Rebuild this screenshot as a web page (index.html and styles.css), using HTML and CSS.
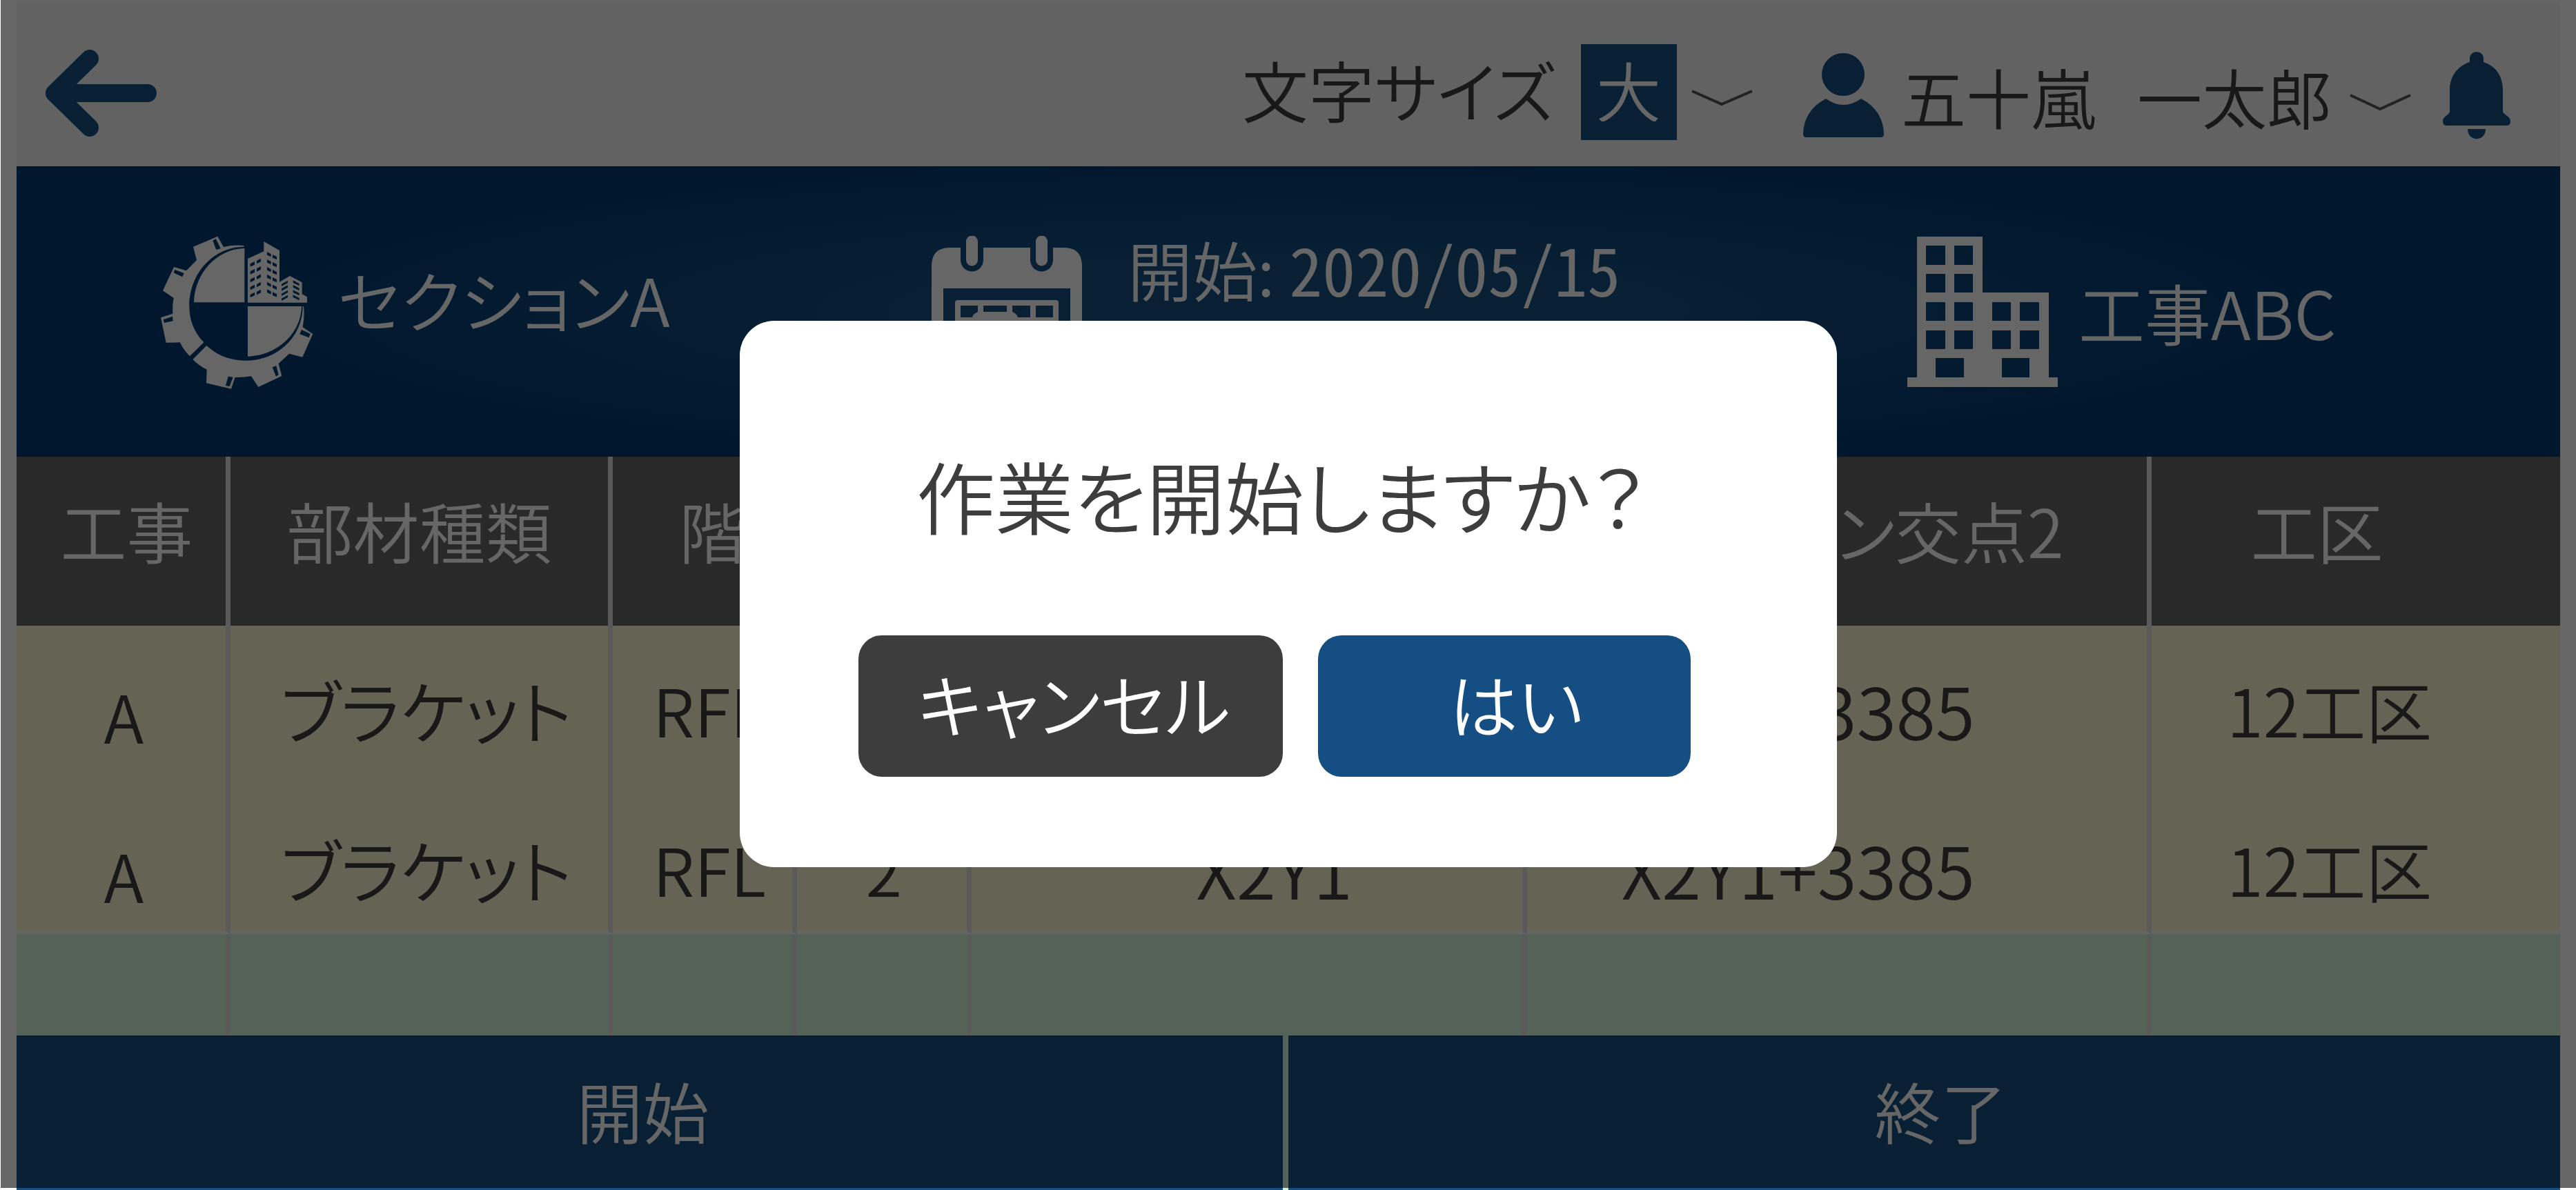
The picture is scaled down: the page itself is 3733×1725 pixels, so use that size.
FILE: index.html
```html
<!DOCTYPE html>
<html lang="ja">
<head>
<meta charset="utf-8">
<meta name="viewport" content="width=device-width, initial-scale=1">
<title>作業開始の確認</title>
<link rel="stylesheet" href="styles.css">
</head>
<body>
<div class="app">
  <header class="topbar">
    <a class="back" href="#" aria-label="戻る">
      <svg width="162" height="139" viewBox="66 64 162 139"><path d="M130 85L79 135L130 185M79 135H214" fill="none" stroke="#144e82" stroke-width="26" stroke-linecap="round" stroke-linejoin="round"/></svg>
    </a>
    <div class="tools">
      <label class="size-label" for="size">文字サイズ</label>
      <select class="size-select" id="size"><option>大</option><option>中</option><option>小</option></select>
      <svg class="size-chevron" width="91" height="139" viewBox="0 0 91 139"><path d="M2 68L45 87L89 68" fill="none" stroke="#555" stroke-width="4"/></svg>
      <button class="user" type="button">
        <svg width="117" height="139" viewBox="2612 64 117 139" fill="#144e82"><circle cx="2670" cy="108" r="31"/><path d="M2645 143Q2670 161 2696 143Q2728 160 2729 194Q2729 199 2725 199H2616Q2612 199 2612 194Q2613 160 2645 143Z"/></svg>
        <span class="user-name"><span>五十嵐</span><span>一太郎</span></span>
        <svg width="91" height="139" viewBox="0 0 91 139"><path d="M2 74L45 94L89 74" fill="none" stroke="#555" stroke-width="4"/></svg>
      </button>
      <button class="bell" type="button" aria-label="お知らせ">
        <svg width="98" height="139" viewBox="3540 64 98 139" fill="#144e82"><path d="M3579 90V85C3579 72 3599 72 3599 85V90C3618 96 3627 112 3627 130V162C3630 168 3638 168 3638 176Q3638 182 3632 182H3546Q3540 182 3540 176C3540 168 3548 168 3550 162V130C3550 112 3560 96 3579 90Z"/><path d="M3576 187H3602C3602 206 3576 206 3576 187Z"/></svg>
      </button>
    </div>
  </header>

  <section class="summary">
    <div class="summary-item section-item">
      <svg width="250" height="260" viewBox="0 0 750 780" fill="#fff" fill-rule="evenodd">
        <path d="M400 102Q355 98 312 108L286 62L180 107L195 165L150 211L96 195L48 298L95 330Q89 360 91 398L39 415L62 524L122 523Q138 556 165 583L226 523C180 475 163 420 163 365C163 220 270 108 400 107ZM265 80L279 73L299 115L280 120ZM100 207L140 222L133 238L95 220ZM50 424L90 410L92 430L54 438Z"/>
        <path d="M238 537L178 597Q205 625 239 641L237 700L345 725L362 675Q400 676 432 670L463 717L565 669L551 615L597 572L655 587L700 486L656 457Q665 410 660 366L656 366C656 500 545 602 410 602C340 602 285 580 238 537ZM332 671L353 674L338 714L321 711ZM524 631L541 625L551 664L540 671ZM651 468L689 486L683 502L643 487Z"/>
        <path d="M403 114V349H183C186 220 285 116 403 114ZM417 366H651C649 485 545 580 417 584Z"/>
        <path d="M417 350V159L487 127V84L555 123V260L600 234L653 262V313L675 325V350Z
          M428 181l19-10v14l-19 9zM428 214l19-10v14l-19 9zM428 249l19-10v14l-19 9zM428 282l19-10v14l-19 9zM428 315l19-10v14l-19 9z
          M456 168l18-10v14l-18 9zM456 202l18-10v14l-18 9zM456 236l18-10v14l-18 9zM456 270l18-10v14l-18 9zM456 303l18-10v14l-18 9z
          M501 129l17 9v13l-17-8zM501 162l17 9v13l-17-8zM501 195l17 9v13l-17-8zM501 228l17 9v13l-17-8zM501 260l17 9v13l-17-8zM501 292l17 9v13l-17-8z
          M525 141l18 9v13l-18-8zM525 174l18 9v13l-18-8zM525 207l18 9v13l-18-8zM525 240l18 9v13l-18-8zM525 272l18 9v13l-18-8zM525 304l18 9v13l-18-8z
          M564 269l27-15v10l-27 15zM564 289l27-15v10l-27 15zM564 311l27-15v10l-27 15zM564 332l27-15v10l-27 15z
          M614 253l27 14v10l-27-13zM614 273l27 14v10l-27-13zM614 295l27 14v10l-27-13zM614 316l27 14v10l-27-13z"/>
      </svg>
      <span class="section-name">セクションA</span>
    </div>
    <div class="summary-item date-item">
      <svg width="218" height="220" viewBox="1350 340 218 220" fill="#fff" fill-rule="evenodd">
        <path d="M1376 357H1392V375A16 16 0 0 0 1425 375V357H1493V375A16 16 0 0 0 1526 375V357H1542Q1568 357 1568 384V534Q1568 560 1542 560H1376Q1350 560 1350 534V384Q1350 357 1376 357ZM1367 416V543H1551V416Z"/>
        <path d="M1400 348A8 8 0 0 1 1417 348V375A8 8 0 0 1 1400 375ZM1501 348A8 8 0 0 1 1518 348V375A8 8 0 0 1 1501 375Z"/>
        <path d="M1388 433H1530Q1534 433 1534 437V525H1384V437Q1384 433 1388 433ZM1392 441V458H1409Q1410 453 1417 450V441ZM1425 441V450H1459V441ZM1467 441V450Q1474 453 1475 458H1493V441ZM1501 441V458H1526V441ZM1392 467V484H1417V467ZM1501 467V484H1526V467ZM1392 492V517H1417V492ZM1501 492V517H1526V492Z"/>
      </svg>
      <div class="dates"><div>開始: <span class="date">2020/05/15</span></div><div>終了: <span class="date">2020/05/20</span></div></div>
    </div>
    <div class="summary-item site-item">
      <svg width="218" height="218" viewBox="2764 345 218 218" fill="#fff" fill-rule="evenodd"><path d="M2778 345H2873V426H2969V549H2982V563H2764V549H2778ZM2791 358h28v28h-28zM2832 358h27v28h-27zM2791 399h28v27h-28zM2832 399h27v27h-27zM2791 440h28v27h-28zM2832 440h27v27h-27zM2887 440h27v27h-27zM2927 440h28v27h-28zM2791 481h28v27h-28zM2832 481h27v27h-27zM2887 481h27v27h-27zM2927 481h28v27h-28zM2805 521h41v28h-41zM2901 521h40v28h-40z"/></svg>
      <span>工事ABC</span>
    </div>
  </section>

  <main>
    <table class="parts">
      <colgroup><col class="c-work"><col class="c-kind"><col class="c-floor"><col class="c-node"><col class="c-line1"><col class="c-line2"><col class="c-zone"></colgroup>
      <thead><tr><th>工事</th><th>部材種類</th><th>階</th><th>節</th><th>ライン交点1</th><th>ライン交点2</th><th>工区</th></tr></thead>
      <tbody>
        <tr><td>A</td><td>ブラケット</td><td>RFL</td><td>2</td><td>X2Y1</td><td>X2Y1+3385</td><td>12工区</td></tr>
        <tr class="group-end"><td>A</td><td>ブラケット</td><td>RFL</td><td>2</td><td>X2Y1</td><td>X2Y1+3385</td><td>12工区</td></tr>
        <tr class="blank"><td></td><td></td><td></td><td></td><td></td><td></td><td></td></tr>
      </tbody>
    </table>
  </main>

  <footer class="actions">
    <button class="start" type="button">開始</button>
    <button class="finish" type="button">終了</button>
  </footer>
</div>

<div class="overlay">
  <div class="dialog" role="dialog" aria-modal="true" aria-labelledby="ask">
    <h1 class="question" id="ask">作業を開始しますか？</h1>
    <div class="choices">
      <button class="cancel" type="button">キャンセル</button>
      <button class="yes" type="button">はい</button>
    </div>
  </div>
</div>
</body>
</html>
```
FILE: styles.css
```css
* { box-sizing: border-box; }

body {
  margin: 0;
  background: #fff;
  color: #3d3d3d;
  font-family: "Noto Sans CJK JP", sans-serif;
  font-size: 96px;
  font-weight: 350;
  line-height: 1;
  font-feature-settings: "palt";
}

button, select {
  margin: 0;
  padding: 0;
  border: 0;
  background: none;
  color: inherit;
  font: inherit;
  font-feature-settings: inherit;
}

svg { display: block; flex: none; }

.app { margin: 0 23px 0 24px; }

/* Top bar */
.topbar {
  display: flex;
  justify-content: space-between;
  padding: 62px 72px 38px 42px;
  border-top: 2px solid #fff;
  background: #f5f5f5;
  font-size: 94px;
}
.tools { display: flex; white-space: nowrap; }
.size-label { margin-right: 38px; padding-bottom: 10px; font-size: 96px; line-height: 129px; }
.size-select {
  appearance: none;
  width: 139px;
  height: 139px;
  padding: 0 22px 10px;
  border-radius: 0;
  background: #144e82;
  color: #fff;
}
.size-chevron { margin: 0 72px 0 20px; }
.user { display: flex; gap: 25px; margin-right: 45px; }
.user-name { display: flex; gap: 60px; padding-top: 12px; line-height: 127px; }

/* Summary band */
.summary {
  display: grid;
  grid-template-columns: 1130fr 1414fr 946fr;
  align-items: center;
  height: 421px;
  padding-left: 196px;
  background: radial-gradient(ellipse 43% 55% at 50% 50%, #144e82 0%, #144e82 35%, #003a70 100%);
  color: #fff;
  white-space: nowrap;
}
.summary-item { display: flex; align-items: center; }
.section-item { gap: 20px; }
.section-name { padding-bottom: 38px; }
.date-item { gap: 66px; }
.dates { font-size: 94px; line-height: 126px; }
.date { font-size: 96px; font-weight: 400; font-feature-settings: "hwid"; }
.site-item { gap: 30px; }

/* Parts table */
.parts {
  width: 100%;
  border-collapse: separate;
  border-spacing: 0;
  table-layout: fixed;
  white-space: nowrap;
}
.c-work { width: 8.41%; }
.c-kind { width: 15.03%; }
.c-floor { width: 7.24%; }
.c-node { width: 6.86%; }
.c-line1 { width: 21.84%; }
.c-line2 { width: 24.55%; }
.c-zone { width: 16.07%; }
.parts th, .parts td {
  padding: 0;
  border-right: 7px solid #e1e1e1;
  font-weight: inherit;
  text-align: center;
  vertical-align: top;
}
.parts th:last-child, .parts td:last-child { border-right: 0; }
.parts th { height: 245px; padding-top: 58px; background: #666; color: #fff; }
.parts th:nth-child(1) { padding-left: 16px; }
.parts th:nth-child(3) { padding-left: 28px; }
.parts th:nth-child(6) { padding-right: 120px; text-align: right; }
.parts th:nth-child(7) { padding-right: 112px; }
.parts td { height: 231px; padding-top: 73px; background: #fdf8d2; }
.parts td:nth-child(1) { padding-top: 82px; padding-left: 8px; }
.parts td:nth-child(2) { padding-left: 20px; font-size: 100px; line-height: 96px; }
.parts td:nth-child(3) { padding-left: 58px; text-align: left; }
.parts td:nth-child(4) { padding-left: 6px; }
.parts td:nth-child(5) { padding-left: 80px; font-size: 104px; line-height: 96px; }
.parts td:nth-child(6) { padding-right: 112px; font-size: 104px; line-height: 96px; }
.parts td:nth-child(7) { padding-right: 76px; }
.parts .group-end td { height: 216px; border-bottom: 4px solid #fff; }
.parts .blank td { height: 147px; background: #d5f5da; }

/* Bottom actions */
.actions {
  display: grid;
  grid-template-columns: 1835fr 1843fr;
  gap: 8px;
  background: #d5f5da;
}
.actions button { height: 224px; padding-bottom: 8px; background: #144e82; color: #fff; }
.actions .start { padding-right: 20px; }
.actions .finish { padding-left: 48px; }

/* Confirmation dialog */
.overlay {
  position: fixed;
  inset: 0 0 3px 1px;
  display: flex;
  align-items: center;
  justify-content: center;
  background: rgba(0, 0, 0, 0.6);
}
.dialog {
  width: 43%;
  max-width: 1590px;
  padding: 196px 212px 131px 172px;
  border-radius: 50px;
  background: #fff;
  white-space: nowrap;
}
.question {
  margin: 0 0 148px;
  padding-left: 20px;
  font-size: 114px;
  font-weight: inherit;
  line-height: 112px;
  text-align: center;
}
.choices { display: grid; grid-template-columns: 615fr 540fr; gap: 51px; font-size: 100px; }
.choices button { height: 205px; padding-bottom: 10px; border-radius: 34px; color: #fff; }
.choices .cancel { padding-left: 10px; background: #3d3d3d; }
.choices .yes { padding-left: 34px; background: #144e82; }
```
